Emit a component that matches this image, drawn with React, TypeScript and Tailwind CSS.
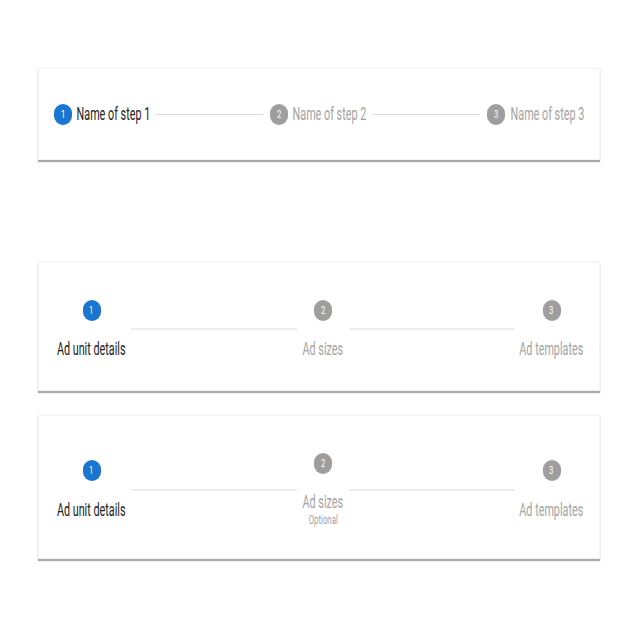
import React from "react";

const FONT = { fontFamily: "Roboto, 'Noto Sans', sans-serif" };

function Txt({
  w,
  text,
  cls,
}: {
  w: string;
  text: string;
  cls: string;
}) {
  return (
    <span className={`flex justify-center shrink-0 ${w}`}>
      <span className={`inline-block whitespace-nowrap scale-x-[0.6] ${cls}`}>{text}</span>
    </span>
  );
}

function Dot({ n, active }: { n: number; active?: boolean }) {
  return (
    <span
      className={`flex items-center justify-center shrink-0 w-[18px] h-[21px] rounded-full ${
        active ? "bg-[#1976d2]" : "bg-[#9e9e9e]"
      }`}
    >
      <span className="inline-block scale-x-[0.7] text-[11px] leading-none text-white">{n}</span>
    </span>
  );
}

const card =
  "bg-white border border-[#f3f3f3] shadow-[0_2px_1px_rgba(0,0,0,0.33),0_0_2px_rgba(0,0,0,0.05)]";

const big = "text-[18px] leading-[20px]";

export default function App() {
  return (
    <div className="w-[640px] h-[640px] bg-white pt-[68px] pl-[38px] pr-[40px]" style={FONT}>
      {/* Card 1: horizontal labels */}
      <div className={`${card} h-[92px] flex items-center px-[15px]`}>
        <Dot n={1} active />
        <span className="w-[5px]" />
        <Txt w="w-[72px]" text="Name of step 1" cls={`${big} text-[#212121]`} />
        <span className="flex-1 h-px bg-[#dadada] mx-[7px]" />
        <Dot n={2} />
        <span className="w-[5px]" />
        <Txt w="w-[73px]" text="Name of step 2" cls={`${big} text-[#a3a3a3]`} />
        <span className="flex-1 h-px bg-[#dadada] mx-[7px]" />
        <Dot n={3} />
        <span className="w-[5px]" />
        <Txt w="w-[74px]" text="Name of step 3" cls={`${big} text-[#a3a3a3]`} />
      </div>

      {/* Card 2: bottom labels */}
      <div className={`${card} mt-[102px] h-[129px] flex items-center pt-[5px] pl-[18px] pr-[15px]`}>
        <div className="flex flex-col items-center gap-[18px]">
          <Dot n={1} active />
          <Txt w="w-[69px]" text="Ad unit details" cls={`${big} text-[#212121]`} />
        </div>
        <span className="flex-1 h-[2px] bg-[#ededed] ml-[5px] mr-[6px]" />
        <div className="flex flex-col items-center gap-[18px]">
          <Dot n={2} />
          <Txt w="w-[40px]" text="Ad sizes" cls={`${big} text-[#a3a3a3]`} />
        </div>
        <span className="flex-1 h-[2px] bg-[#ededed] ml-[6px] mr-[4px]" />
        <div className="flex flex-col items-center gap-[18px]">
          <Dot n={3} />
          <Txt w="w-[65px]" text="Ad templates" cls={`${big} text-[#a3a3a3]`} />
        </div>
      </div>

      {/* Card 3: bottom labels with optional */}
      <div className={`${card} mt-[24px] h-[144px] flex items-center pt-[6px] pl-[18px] pr-[15px]`}>
        <div className="flex flex-col items-center gap-[19px]">
          <Dot n={1} active />
          <Txt w="w-[69px]" text="Ad unit details" cls={`${big} text-[#212121]`} />
        </div>
        <span className="flex-1 h-[2px] bg-[#ededed] ml-[5px] mr-[6px]" />
        <div className="flex flex-col items-center">
          <Dot n={2} />
          <span className="h-[18px]" />
          <Txt w="w-[40px]" text="Ad sizes" cls={`${big} text-[#a3a3a3]`} />
          <Txt w="w-[30px]" text="Optional" cls="text-[13px] leading-[15px] text-[#a3a3a3]" />
        </div>
        <span className="flex-1 h-[2px] bg-[#ededed] ml-[6px] mr-[4px]" />
        <div className="flex flex-col items-center gap-[19px]">
          <Dot n={3} />
          <Txt w="w-[65px]" text="Ad templates" cls={`${big} text-[#a3a3a3]`} />
        </div>
      </div>
    </div>
  );
}
